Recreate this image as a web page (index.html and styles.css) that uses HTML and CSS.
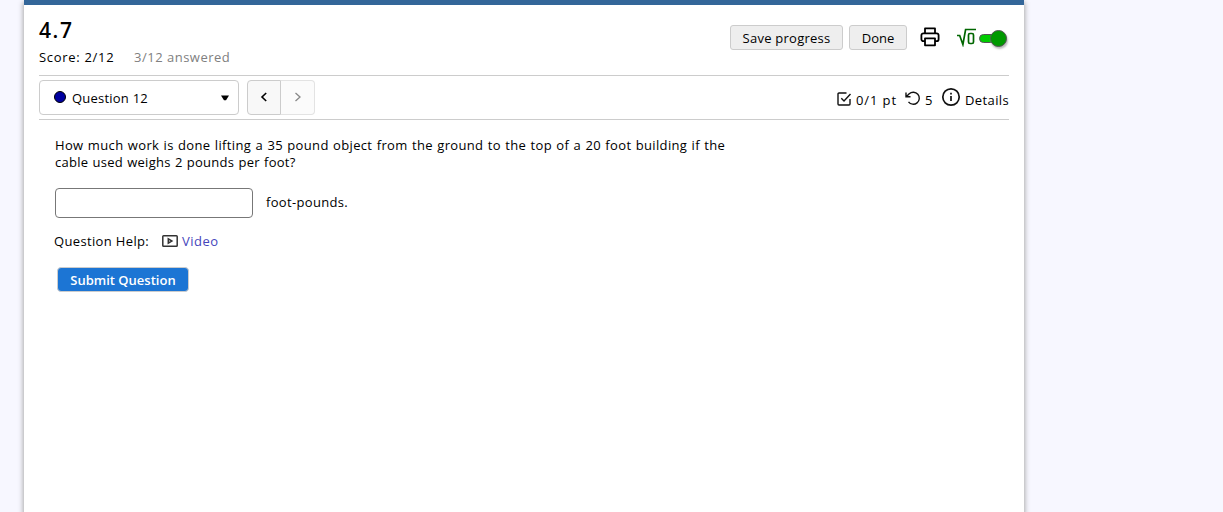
FILE: index.html
```html
<!DOCTYPE html>
<html lang="en">
<head>
    <meta charset="UTF-8">
    <meta name="viewport" content="width=device-width, initial-scale=1.0">
    <title>4.7</title>
    <link rel="stylesheet" href="styles.css">
</head>
<body>
    <div class="container">
        <header class="assess-header">
            <div class="title-block">
                <h1>4.7</h1>
                <div class="score">
                    <span class="score-total">Score: 2/12</span>
                    <span class="answered">3/12 answered</span>
                </div>
            </div>
            <div class="header-actions">
                <button type="button" class="btn save-btn">Save progress</button>
                <button type="button" class="btn done-btn">Done</button>
                <svg class="print-icon" width="20" height="20" viewBox="0 0 20 20" fill="none" stroke="#000" stroke-width="1.8" stroke-linejoin="round">
                    <path d="M5 6.2V1.4h10v4.8M5 14.2H3.4a2 2 0 0 1-2-2V8.3a2 2 0 0 1 2-2h13.2a2 2 0 0 1 2 2v3.9a2 2 0 0 1-2 2H15"/>
                    <path d="M5 11.3h10v7H5z"/>
                </svg>
                <svg class="root-icon" width="19" height="19" viewBox="0 0 19 19" fill="none" stroke="#060" stroke-width="1.7">
                    <path d="M0 7.5h2.7l3.2 9L8.6 1.5H19"/>
                    <rect x="11.5" y="5.5" width="5" height="10" rx="1.5"/>
                </svg>
                <span class="toggle"><span class="toggle-knob"></span></span>
            </div>
        </header>

        <nav class="question-nav">
            <button type="button" class="question-select">
                <span class="dot"></span>
                <span class="question-name">Question 12</span>
                <svg width="8" height="6" viewBox="0 0 8 6"><path d="M0 .5h8L5 5.3H3z"/></svg>
            </button>
            <div class="pager">
                <button type="button" class="prev"><svg width="8" height="10" viewBox="0 0 8 10" fill="none" stroke="#000" stroke-width="1.6"><path d="M6.2 1L2 5l4.2 4"/></svg></button>
                <button type="button" class="next" disabled><svg width="8" height="10" viewBox="0 0 8 10" fill="none" stroke="#888" stroke-width="1.3"><path d="M1.5 1L6 5l-4.5 4"/></svg></button>
            </div>
            <div class="details">
                <svg class="check-icon" width="14" height="14" viewBox="0 0 14 14" fill="none" stroke="#111" stroke-width="1.4">
                    <path d="M9.5 1H2a1 1 0 0 0-1 1v10a1 1 0 0 0 1 1h10a1 1 0 0 0 1-1V7"/>
                    <path d="M4.3 6.3L7 9l6.5-7"/>
                </svg>
                <span class="points">0/1 pt</span>
                <svg class="retry-icon" width="16" height="15" viewBox="0 0 16 15" fill="none" stroke="#111" stroke-width="1.4">
                    <path d="M1 1.5v4.3h4.5M1.5 5.5l2.7-2.7a6 6 0 1 1-.7 8"/>
                </svg>
                <span class="tries">5</span>
                <svg class="info-icon" width="20" height="20" viewBox="0 0 20 20" fill="none" stroke="#111" stroke-width="1.7">
                    <circle cx="10" cy="10" r="8.2"/>
                    <path d="M10 9v5M10 5.7v1.8"/>
                </svg>
                <span class="details-label">Details</span>
            </div>
        </nav>

        <main class="question">
            <p class="prompt"><span class="line-one">How much work is done lifting a 35 pound object from the ground to the top of a 20 foot building if the</span><br><span class="line-two">cable used weighs 2 pounds per foot?</span></p>
            <div class="answer">
                <input type="text" aria-label="Answer">
                <span class="unit">foot-pounds.</span>
            </div>
            <div class="help">
                <span class="help-label">Question Help:</span>
                <svg width="16" height="12" viewBox="0 0 16 12" fill="none" stroke="#333" stroke-width="1.5">
                    <rect x=".8" y=".8" width="14.4" height="10.4" rx=".8"/>
                    <path d="M6.3 3.8v4.4l3.6-2.2z"/>
                </svg>
                <a class="video">Video</a>
            </div>
            <button type="button" class="submit">Submit Question</button>
        </main>
    </div>
</body>
</html>
```
FILE: styles.css
```css
* {
    box-sizing: border-box;
}
body {
    margin: 0;
    height: 512px;
    overflow: hidden;
    background-color: #f7f7ff;
    color: #000;
    font-family: "Trebuchet MS", "Open Sans", sans-serif;
    font-size: 13px;
    line-height: 17px;
}
svg {
    display: block;
    flex: none;
}
button {
    font: inherit;
    color: inherit;
    padding: 0;
    white-space: nowrap;
}
span, a {
    white-space: nowrap;
}
.container {
    width: 1000px;
    height: 512px;
    margin-left: 24px;
    padding: 0 15px;
    background-color: #fff;
    border-top: 5px solid #336699;
    box-shadow: 0 3px 5px 1px #aaa;
}
.assess-header {
    display: flex;
    justify-content: space-between;
    height: 71px;
    border-bottom: 1px solid #ccc;
}
h1 {
    margin: 10px 0 0;
    font-size: 21px;
    font-weight: 600;
    line-height: 30px;
    letter-spacing: 1.6px;
}
.score {
    display: flex;
    gap: 20px;
    margin-top: 4px;
}
.score-total {
    width: 75px;
    letter-spacing: 0.7px;
}
.answered {
    color: #808080;
    letter-spacing: 0.5px;
}
.header-actions {
    display: flex;
    align-items: center;
    height: 25px;
    margin: 20px 2px 0 0;
}
.btn {
    height: 25px;
    padding-top: 1px;
    background-color: #eee;
    border: 1px solid #ccc;
    border-radius: 3px;
}
.save-btn {
    width: 113px;
    margin-right: 6px;
    letter-spacing: 0.25px;
}
.done-btn {
    width: 58px;
}
.print-icon {
    margin: -1px 0 0 13px;
}
.root-icon {
    margin: -1px 0 0 17px;
}
.toggle {
    display: flex;
    align-items: center;
    justify-content: flex-end;
    width: 28px;
    height: 9px;
    margin: 2px 0 0 3px;
    background-color: #0c0;
    border: 1px solid #555;
    border-radius: 5px;
}
.toggle-knob {
    flex: none;
    width: 17px;
    height: 17px;
    margin-right: -1px;
    background-color: #090;
    border: 1px solid #555;
    border-radius: 50%;
    box-shadow: 1px 2px 2px #bbb;
}
.question-nav {
    display: flex;
    align-items: center;
    height: 44px;
    border-bottom: 1px solid #ccc;
}
.question-select {
    display: flex;
    align-items: center;
    width: 200px;
    height: 35px;
    padding: 0 9px 0 14px;
    background-color: #fff;
    border: 1px solid #ccc;
    border-radius: 4px;
}
.dot {
    width: 12px;
    height: 12px;
    margin: -2px 6px 0 0;
    background-color: #0000a0;
    border: 1px solid #000;
    border-radius: 50%;
}
.question-name {
    margin-right: auto;
    padding-top: 1px;
    letter-spacing: 0.22px;
}
.pager {
    display: flex;
    margin-left: 8px;
}
.pager button {
    display: flex;
    align-items: center;
    justify-content: center;
    width: 34px;
    height: 35px;
    padding-bottom: 1px;
    background-color: #f8f8f8;
    border: 1px solid #ccc;
}
.pager .prev {
    border-radius: 4px 0 0 4px;
}
.pager .next {
    background-color: #fbfbfb;
    border-color: #e3e3e3;
    border-left: 0;
    border-radius: 0 4px 4px 0;
}
.details {
    display: flex;
    align-items: center;
    margin: 3px 0 0 auto;
}
.details span {
    padding-top: 2px;
}
.check-icon {
    margin: 0 5px 1px 0;
}
.points {
    width: 41px;
    margin-right: 8px;
    letter-spacing: 0.9px;
}
.retry-icon {
    margin: 0 4px 1px 0;
}
.tries {
    width: 8px;
    margin-right: 8px;
}
.info-icon {
    margin: 0 4px 5px 0;
}
.details-label {
    width: 44px;
    letter-spacing: 0.4px;
}
.question {
    padding: 17px 16px;
}
.prompt {
    margin: 0;
    word-spacing: 0.6px;
}
.line-one {
    letter-spacing: 0.35px;
}
.line-two {
    letter-spacing: 0.26px;
}
.answer {
    display: flex;
    align-items: center;
    margin-top: 17px;
}
.answer input {
    width: 198px;
    height: 30px;
    margin: 0 13px 0 0;
    border: 1px solid #777;
    border-radius: 4px;
}
.unit {
    padding-bottom: 2px;
    letter-spacing: 0.33px;
}
.help {
    display: flex;
    align-items: center;
    margin: 15px 0 0 -1px;
}
.help-label {
    width: 96px;
    letter-spacing: 0.35px;
}
.help svg {
    margin: 0 4px 2px 12px;
}
.video {
    color: #4545bb;
    letter-spacing: 0.5px;
}
.submit {
    display: block;
    width: 132px;
    height: 25px;
    margin: 17px 0 0 2px;
    padding-top: 1px;
    background-color: #1c75d4;
    color: #fff;
    font-weight: 600;
    border: 1px solid #ccc;
    border-radius: 4px;
}
```
